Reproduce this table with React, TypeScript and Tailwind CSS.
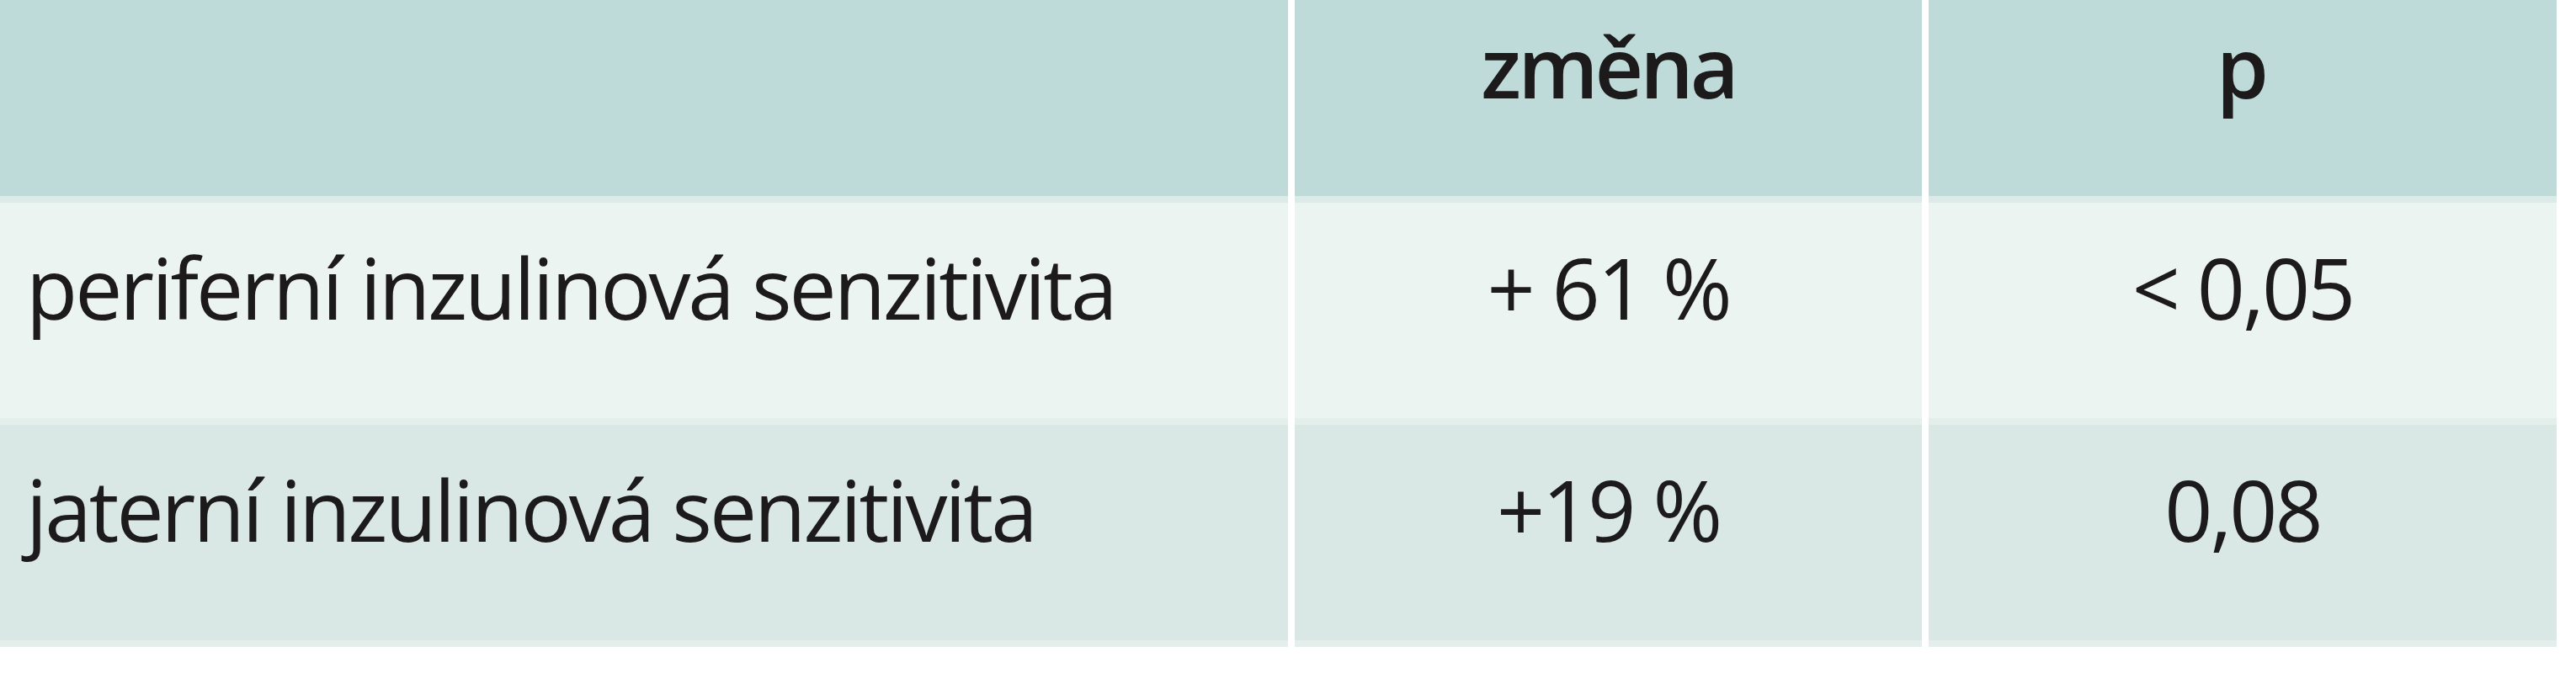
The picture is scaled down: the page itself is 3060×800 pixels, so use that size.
import { Fragment } from "react";

const rows = [
  { label: "periferní inzulinová senzitivita", change: "+ 61 %", p: "< 0,05", bg: "bg-[#ecf4f1]" },
  { label: "jaterní inzulinová senzitivita", change: "+19 %", p: "0,08", bg: "bg-[#d9e8e4]" },
];

export default function App() {
  return (
    <div className="w-[3060px] h-[800px] bg-white font-['Open_Sans',sans-serif] text-[#1c1a1b]">
      <div className="grid w-[3037px] grid-cols-[1530px_745px_746px] gap-x-[8px]">
        {/* header */}
        <div className="h-[241px] bg-[#bedbd9] border-b-[8px] border-[#dcebe8]" />
        <div className="h-[241px] bg-[#bedbd9] border-b-[8px] border-[#dcebe8] pt-[28px] text-center text-[100px] font-semibold leading-none tracking-[-4px]">
          změna
        </div>
        <div className="h-[241px] bg-[#bedbd9] border-b-[8px] border-[#dcebe8] pt-[28px] text-center text-[100px] font-semibold leading-none">
          p
        </div>

        {rows.map((row) => (
          <Fragment key={row.label}>
            <div
              className={`h-[264px] ${row.bg} border-b-[8px] border-[#e4eeeb] pt-[50px] pl-[31px] text-[100px] leading-none tracking-[-3px] whitespace-nowrap`}
            >
              {row.label}
            </div>
            <div className={`h-[264px] ${row.bg} border-b-[8px] border-[#e4eeeb] pt-[50px] text-center text-[100px] leading-none tracking-[-3px]`}>
              {row.change}
            </div>
            <div className={`h-[264px] ${row.bg} border-b-[8px] border-[#e4eeeb] pt-[50px] text-center text-[100px] leading-none tracking-[-3px]`}>
              {row.p}
            </div>
          </Fragment>
        ))}
      </div>
    </div>
  );
}
